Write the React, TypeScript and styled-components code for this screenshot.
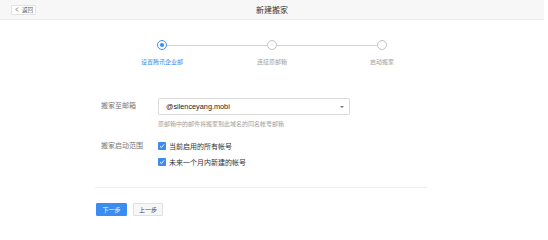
import React from "react";
import styled, { createGlobalStyle } from "styled-components";

const colors = {
  blue: "#3b8cf0",
  text: "#333",
  label: "#777",
  hint: "#a0a0a0",
  border: "#dcdcdc",
  line: "#d4d4d4",
  headerBg: "#f7f7f7",
};

const GlobalStyle = createGlobalStyle`
  html, body {
    margin: 0;
    padding: 0;
    background: #fff;
    font-family: "Liberation Sans", "Noto Sans CJK SC", sans-serif;
  }
`;

const Page = styled.div`
  width: 544px;
  height: 231px;
  display: flex;
  flex-direction: column;
  background: #fff;
`;

const Header = styled.div`
  height: 20px;
  box-sizing: border-box;
  background: ${colors.headerBg};
  border-bottom: 1px solid #ececec;
  display: flex;
  align-items: center;
  padding-left: 11px;
  position: relative;
`;

const BackButton = styled.button`
  height: 10px;
  width: 25px;
  box-sizing: border-box;
  border: 1px solid #e2e2e2;
  background: #fff;
  border-radius: 1px;
  padding: 0 0 0 3px;
  display: flex;
  align-items: center;
  gap: 3px;
  font-family: inherit;
  font-size: 5.5px;
  color: #555;
`;

const Title = styled.div`
  position: absolute;
  left: 0;
  right: 0;
  top: 0;
  height: 19px;
  display: flex;
  align-items: center;
  justify-content: center;
  font-size: 8px;
  color: ${colors.text};
  pointer-events: none;
`;

const Track = styled.div`
  display: flex;
  align-items: center;
  margin: 20px 0 0 157px;
`;

const Dot = styled.div<{ active?: boolean }>`
  width: 10px;
  height: 10px;
  box-sizing: border-box;
  border-radius: 50%;
  border: 1px solid ${(p) => (p.active ? colors.blue : "#c4c4c4")};
  background: #fff;
  display: flex;
  align-items: center;
  justify-content: center;
  &::after {
    content: "";
    width: 4px;
    height: 4px;
    border-radius: 50%;
    background: ${(p) => (p.active ? colors.blue : "transparent")};
  }
`;

const Line = styled.div`
  width: 100px;
  height: 1px;
  background: ${colors.line};
`;

const StepLabels = styled.div`
  display: grid;
  grid-template-columns: repeat(3, 110px);
  margin: 8px 0 0 107px;
`;

const StepLabel = styled.div<{ active?: boolean }>`
  text-align: center;
  font-size: 6px;
  line-height: 8px;
  color: ${(p) => (p.active ? colors.blue : colors.hint)};
`;

const Form = styled.div`
  display: grid;
  grid-template-columns: 57px 192px;
  margin: 32px 0 0 101px;
  row-gap: 0;
`;

const FieldLabel = styled.div<{ top?: number }>`
  font-size: 7px;
  line-height: 16px;
  color: ${colors.label};
  padding-top: ${(p) => p.top || 0}px;
`;

const Select = styled.div`
  height: 17px;
  box-sizing: border-box;
  border: 1px solid ${colors.border};
  border-radius: 1px;
  display: flex;
  align-items: center;
  justify-content: space-between;
  padding: 0 5px 0 7px;
  font-size: 7.3px;
  color: #222;
`;

const Caret = styled.span`
  width: 0;
  height: 0;
  border-left: 2px solid transparent;
  border-right: 2px solid transparent;
  border-top: 2.5px solid #777;
`;

const Hint = styled.div`
  grid-column: 2;
  font-size: 6px;
  line-height: 8px;
  color: ${colors.hint};
  margin: 5px 0 10px;
  white-space: nowrap;
`;

const Checks = styled.div`
  display: flex;
  flex-direction: column;
`;

const CheckRow = styled.label`
  display: flex;
  align-items: center;
  gap: 3px;
  height: 16px;
  font-size: 7px;
  color: ${colors.text};
`;

const Box = styled.span`
  width: 8px;
  height: 8px;
  border-radius: 1px;
  background: ${colors.blue};
  display: flex;
  align-items: center;
  justify-content: center;
`;

const Divider = styled.div`
  width: 332px;
  height: 1px;
  background: #eeeeee;
  margin: 17px 0 0 95px;
`;

const Actions = styled.div`
  display: flex;
  gap: 6px;
  margin: 15px 0 0 96px;
`;

const Button = styled.button<{ primary?: boolean }>`
  height: 13px;
  width: ${(p) => (p.primary ? 31 : 30)}px;
  box-sizing: border-box;
  padding: 0;
  border-radius: 1px;
  font-family: inherit;
  font-size: 6px;
  border: 1px solid ${(p) => (p.primary ? colors.blue : "#e0e0e0")};
  background: ${(p) => (p.primary ? colors.blue : "#f7f7f7")};
  color: ${(p) => (p.primary ? "#fff" : "#444")};
`;

const Check = () => (
  <Box>
    <svg width="6" height="6" viewBox="0 0 6 6">
      <path d="M1 3.2 L2.4 4.5 L5 1.4" fill="none" stroke="#fff" strokeWidth="0.9" />
    </svg>
  </Box>
);

const steps = ["设置腾讯企业邮", "连接原邮箱", "启动搬家"];

const App = () => {
  return (
    <Page>
      <GlobalStyle />
      <Header>
        <BackButton>
          <svg width="4" height="5" viewBox="0 0 4 5">
            <path d="M3 0.5 L1 2.5 L3 4.5" fill="none" stroke="#555" strokeWidth="0.8" />
          </svg>
          返回
        </BackButton>
        <Title>新建搬家</Title>
      </Header>
      <Track>
        <Dot active />
        <Line />
        <Dot />
        <Line />
        <Dot />
      </Track>
      <StepLabels>
        {steps.map((s, i) => (
          <StepLabel key={s} active={i === 0}>
            {s}
          </StepLabel>
        ))}
      </StepLabels>
      <Form>
        <FieldLabel>搬家至邮箱</FieldLabel>
        <Select>
          @silenceyang.mobi
          <Caret />
        </Select>
        <Hint>原邮箱中的邮件将搬家到此域名的同名帐号邮箱</Hint>
        <FieldLabel>搬家启动范围</FieldLabel>
        <Checks>
          <CheckRow>
            <Check />
            当前启用的所有帐号
          </CheckRow>
          <CheckRow>
            <Check />
            未来一个月内新建的帐号
          </CheckRow>
        </Checks>
      </Form>
      <Divider />
      <Actions>
        <Button primary>下一步</Button>
        <Button>上一步</Button>
      </Actions>
    </Page>
  );
};

export default App;
